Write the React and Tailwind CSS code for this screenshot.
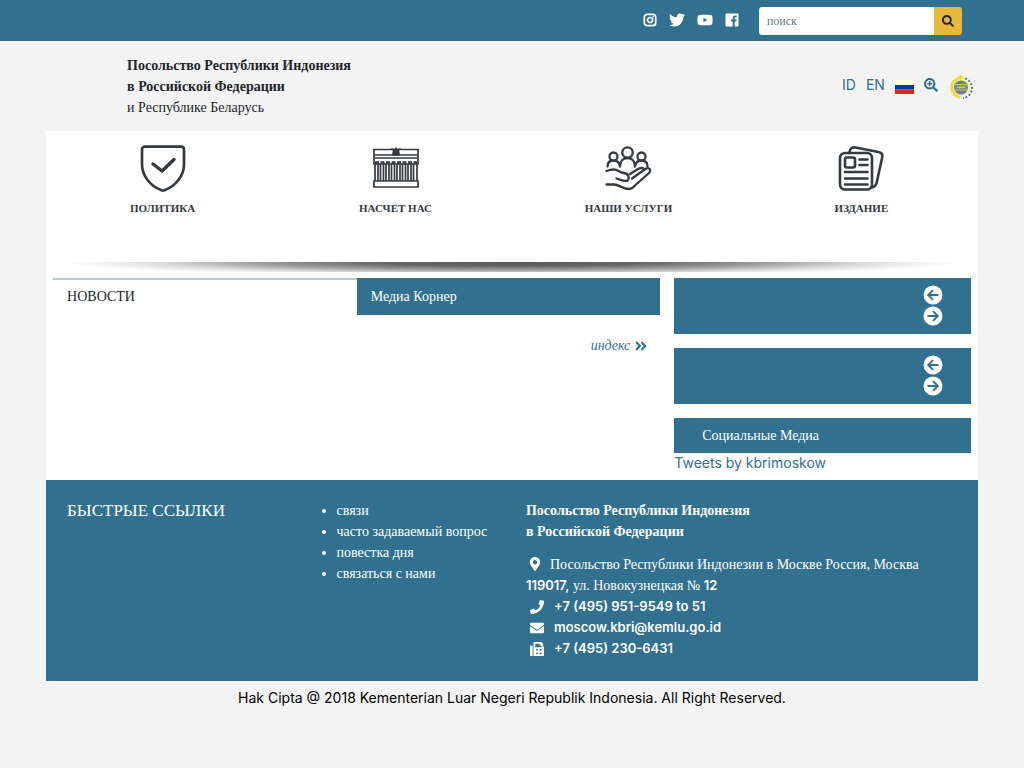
import {
  FaAngleDoubleRight,
  FaEnvelope,
  FaFax,
  FaMapMarkerAlt,
  FaPhone,
  FaSearch,
  FaSearchPlus,
  FaTwitter,
  FaYoutube,
} from "react-icons/fa";

const InstagramIcon = () => (
  <svg viewBox="0 0 14 14" className="size-3.5" fill="none" stroke="currentColor">
    <rect x="1.300" y="1.300" width="11.400" height="11.400" rx="3" strokeWidth="1.700" />
    <circle cx="7" cy="7" r="2.500" strokeWidth="1.700" />
    <circle cx="10.200" cy="3.800" r=".8" fill="currentColor" stroke="none" />
  </svg>
);

const FacebookIcon = () => (
  <svg viewBox="0 0 14 14" className="size-3.5" fill="currentColor">
    <path d="M.8.5h12.4c.2 0 .3.1.3.3v12.4c0 .2-.1.3-.3.3H9.7V8.5h1.7l.3-2H9.7V5.300c0-.6.2-1 1-1h1V2.500c-.2 0-.8-.1-1.500-.1-1.500 0-2.500.9-2.500 2.600v1.500H6v2h1.700v5H.8c-.2 0-.3-.1-.3-.3V.8C.5.600.600.5.800.5z" />
  </svg>
);

const RussianFlag = () => (
  <svg viewBox="0 0 19 14" className="h-3.5 w-[19px]">
    <rect width="19" height="5" fill="#fff" />
    <rect y="5" width="19" height="4.500" fill="#0039a6" />
    <rect y="9.500" width="19" height="4.500" fill="#d52b1e" />
  </svg>
);

const PortalLogo = () => (
  <svg viewBox="0 0 26 26" className="size-[26px]">
    <circle cx="13" cy="13.500" r="9" fill="#eeedb5" />
    <path d="M14 4A9.500 9.500 0 0 0 4 16c1 4 4 6.500 8 7" fill="none" stroke="#e3df3f" strokeWidth="3" />
    <path d="M10 3l3-2 3 2-2 2.500h-3z" fill="#e3df3f" />
    <path d="M17 4.500a10 10 0 0 1-2 19.500" fill="none" stroke="#4f7f86" strokeWidth="2" strokeDasharray="2 1.800" />
    <circle cx="13" cy="13.500" r="7" fill="#6d7b96" />
    <path d="M7 10.500h12v5H7z" fill="#7d8f86" />
    <path d="M7 10.500h12M7 16h12" stroke="#d0c95a" strokeWidth="1" />
    <path d="M9 13.200h8" stroke="#c5cba0" strokeWidth="1.300" />
  </svg>
);

const ShieldIcon = () => (
  <svg viewBox="0 0 48 48" className="size-12" fill="none" stroke="#343a40" strokeWidth="2.700" strokeLinecap="round" strokeLinejoin="round">
    <path d="M6 1.700h36q3 0 3 3v15C45 31 36 41.500 26 45q-2 .8-4 0C12 41.500 3 31 3 19.500v-15q0-2.800 3-2.800z" />
    <path d="M14 19l9 7L35 14.500" strokeWidth="3.400" />
  </svg>
);

const EmbassyIcon = () => (
  <svg viewBox="0 0 48 48" className="size-12" fill="none" stroke="#343a40" strokeWidth="1.700">
    <path d="M2 4.500h44V19H2zM2 36h44v6H2zM2 10h44M2 13h44" />
    <path d="M3 17.500h42" strokeWidth="2.400" strokeDasharray="4 1.500" />
    <path d="M3 19v17M6 19v17M8.500 19v17M11.500 19v17M14 19v17M17 19v17M19.500 19v17M22.500 19v17M25 19v17M28 19v17M30.500 19v17M33.500 19v17M36 19v17M39 19v17M41.500 19v17M45 19v17" />
    <path d="M24 1.500l1.200 2.500 3.800-1-1.800 3 1 4.500h-8.400l1-4.500L19 3l3.800 1z" fill="#343a40" stroke="none" />
  </svg>
);

const ServicesIcon = () => (
  <svg viewBox="0 0 48 48" className="size-12" fill="none" stroke="#343a40" strokeWidth="2.300" strokeLinecap="round" strokeLinejoin="round">
    <circle cx="23.500" cy="7.500" r="5.200" />
    <circle cx="9.500" cy="11.500" r="4" />
    <circle cx="37.500" cy="11.500" r="4" />
    <path d="M16 21.500c0-5.500 3-8.500 7.500-8.500s7.500 3 7.500 8.500M3.500 21.500c0-4 2.500-6 6-6s6 2 6.500 6M31 21.500c.5-4 3-6 6.500-6s6 2 6 6" />
    <path d="M2.500 26c5-2 9-2 12 0 2 1.500 4 2 7 2.500 4 .7 4.500 7.500 0 7.500-3 0-5.500-1.500-9-2.500" />
    <path d="M2.500 39.500H10c5 0 9 4.500 15 4.500 3 0 4.500-2 7-4.500L45 28c2.500-3 .5-6-3-4.500L28 33.500M26 29l8-5c3-1.500 5-1 6 0" />
  </svg>
);

const PublicationIcon = () => (
  <svg viewBox="0 0 48 48" className="size-12" fill="none" stroke="#343a40" strokeWidth="2.600" strokeLinecap="round" strokeLinejoin="round">
    <rect x="3" y="8" width="32" height="36.500" rx="5" />
    <path d="M12.500 7c.5-3.500 2.500-5 6-4.500l23 4.500c3 .6 4.300 2.500 3.700 5.500l-5.500 25c-.7 3-2 4.500-4.700 5" />
    <rect x="8" y="12.500" width="10" height="10" rx="2" />
    <path d="M22.500 14.500h8M22.500 20h8M8 27h22.500M8 33.500h22.500M8 39.500h22.500" />
  </svg>
);

const ArrowIcon = ({ left }) => (
  <svg viewBox="0 0 20 20" className="size-5">
    <circle cx="10" cy="10" r="9.500" fill="#fff" />
    <path
      d={left ? "M15.500 10H5.500M10 5.200L5.200 10l4.800 4.800" : "M4.500 10h10M10 5.200l4.800 4.800-4.800 4.800"}
      fill="none"
      stroke="#31708f"
      strokeWidth="1.900"
    />
  </svg>
);

const menu = [
  { label: "ПОЛИТИКА", Icon: ShieldIcon },
  { label: "НАСЧЕТ НАС", Icon: EmbassyIcon },
  { label: "НАШИ УСЛУГИ", Icon: ServicesIcon },
  { label: "ИЗДАНИЕ", Icon: PublicationIcon },
];

const socials = [
  { label: "Instagram", Icon: InstagramIcon },
  { label: "Twitter", Icon: FaTwitter },
  { label: "YouTube", Icon: FaYoutube },
  { label: "Facebook", Icon: FacebookIcon },
];

const quickLinks = ["связи", "часто задаваемый вопрос", "повестка дня", "связаться с нами"];

const contacts = [
  { text: "+7 (495) 951-9549 to 51", Icon: FaPhone },
  { text: "moscow.kbri@kemlu.go.id", Icon: FaEnvelope },
  { text: "+7 (495) 230-6431", Icon: FaFax },
];

const SliderPanel = () => (
  <div className="mb-3.5 flex flex-col items-end bg-[#31708f] px-7 pt-1.5 pb-2">
    <button type="button" aria-label="Previous" className="flex h-[21px] items-center">
      <ArrowIcon left />
    </button>
    <button type="button" aria-label="Next" className="flex h-[21px] items-center">
      <ArrowIcon />
    </button>
  </div>
);

export default function App() {
  return (
    <div className="min-h-screen bg-[#f3f3f3] font-['Liberation_Serif',serif] text-[14px] leading-[21px] text-[#212529]">
      <div className="bg-[#31708f]">
        <div className="mx-auto flex w-[91%] items-center justify-end pt-[7px] pr-4 pb-1.5">
          <div className="mr-5 flex items-center gap-3 pb-0.5 text-white">
            {socials.map(({ label, Icon }) => (
              <a key={label} href="#" aria-label={label} className="text-[16px]">
                <Icon />
              </a>
            ))}
          </div>
          <form className="flex h-7" onSubmit={(e) => e.preventDefault()}>
            <input
              type="text"
              aria-label="поиск"
              placeholder="поиск"
              className="w-[175px] rounded-l-[3px] bg-white px-2 text-[12px] placeholder:text-[#6c757d]"
            />
            <button type="submit" aria-label="поиск" className="flex w-7 items-center justify-center rounded-r-[3px] bg-[#e9b93c]">
              <FaSearch className="size-3" />
            </button>
          </form>
        </div>
      </div>

      <header className="mx-auto flex min-h-[90px] w-[91%] items-center justify-between pr-1">
        <div className="pl-[81px]">
          <p className="font-bold">Посольство Республики Индонезия</p>
          <p className="font-bold">в Российской Федерации</p>
          <p>и Республике Беларусь</p>
        </div>
        <div className="flex items-start gap-2.5 pt-0.5 font-['Inter',sans-serif] text-[#31708f]">
          <a href="#">ID</a>
          <a href="#">EN</a>
          <a href="#" aria-label="RU" className="self-center"><RussianFlag /></a>
          <a href="#" aria-label="Zoom" className="flex h-[21px] items-center"><FaSearchPlus className="size-3.5" /></a>
          <a href="#" aria-label="Portal"><PortalLogo /></a>
        </div>
      </header>

      <div className="mx-auto w-[91%] bg-white">
        <nav className="grid grid-cols-4 pt-3.5 pb-[45px]">
          {menu.map(({ label, Icon }) => (
            <a key={label} href="#" className="flex flex-col items-center gap-1.5 text-[11px] leading-[18px] font-bold text-[#343a40]">
              <Icon />
              {label}
            </a>
          ))}
        </nav>
        <div className="h-4">
          <div className="h-2.5 bg-[radial-gradient(ellipse_48%_14px_at_top,#555_0%,#666_30%,#999_55%,#ddd_80%,#fff_100%)]" />
        </div>

        <main className="flex">
          <section className="w-2/3 px-[7px]">
            <div className="flex">
              <h2 className="w-1/2 border-t-2 border-[#bcc6d2] px-3.5 pt-1.5 pb-2">НОВОСТИ</h2>
              <h2 className="w-1/2 bg-[#31708f] px-3.5 py-2 text-white">Медиа Корнер</h2>
            </div>
            <div className="flex justify-end px-3 py-5">
              <a href="#" className="flex items-center gap-1 text-[#31708f] italic">
                индекс <FaAngleDoubleRight />
              </a>
            </div>
          </section>
          <aside className="w-1/3 px-[7px] pb-[7px]">
            <SliderPanel />
            <SliderPanel />
            <h2 className="bg-[#31708f] px-7 py-[7px] text-white">Социальные Медиа</h2>
            <a href="#" className="block font-['Inter',sans-serif] leading-5 text-[#31708f]">Tweets by kbrimoskow</a>
          </aside>
        </main>

        <footer className="flex bg-[#31708f] px-[7px] pt-5 pb-[22px] text-white">
          <h2 className="w-1/4 px-3.5 text-[17px]">БЫСТРЫЕ ССЫЛКИ</h2>
          <ul className="w-1/4 list-disc pl-[54px]">
            {quickLinks.map((link) => (
              <li key={link}>
                <a href="#" className="whitespace-nowrap">{link}</a>
              </li>
            ))}
          </ul>
          <address className="w-1/2 px-3.5 not-italic">
            <p className="font-bold">Посольство Республики Индонезия</p>
            <p className="mb-3 font-bold">в Российской Федерации</p>
            <p>
              <FaMapMarkerAlt className="mr-2 ml-0.5 inline size-3.5 align-[-2px]" />
              Посольство Республики Индонезии в Москве Россия, Москва{" "}
              <span className="font-['Inter',sans-serif] text-[13px] leading-none font-semibold">119017,</span> ул. Новокузнецкая №{" "}
              <span className="font-['Inter',sans-serif] text-[13px] leading-none font-semibold">12</span>
            </p>
            {contacts.map(({ text, Icon }) => (
              <p key={text} className="flex items-center gap-2.5 pl-1 font-['Inter',sans-serif] text-[13px] font-semibold">
                <Icon className="size-3.5" /> {text}
              </p>
            ))}
          </address>
        </footer>
      </div>

      <p className="pt-1.5 text-center font-['Inter',sans-serif] text-black">
        Hak Cipta @ 2018 Kementerian Luar Negeri Republik Indonesia. All Right Reserved.
      </p>
    </div>
  );
}
